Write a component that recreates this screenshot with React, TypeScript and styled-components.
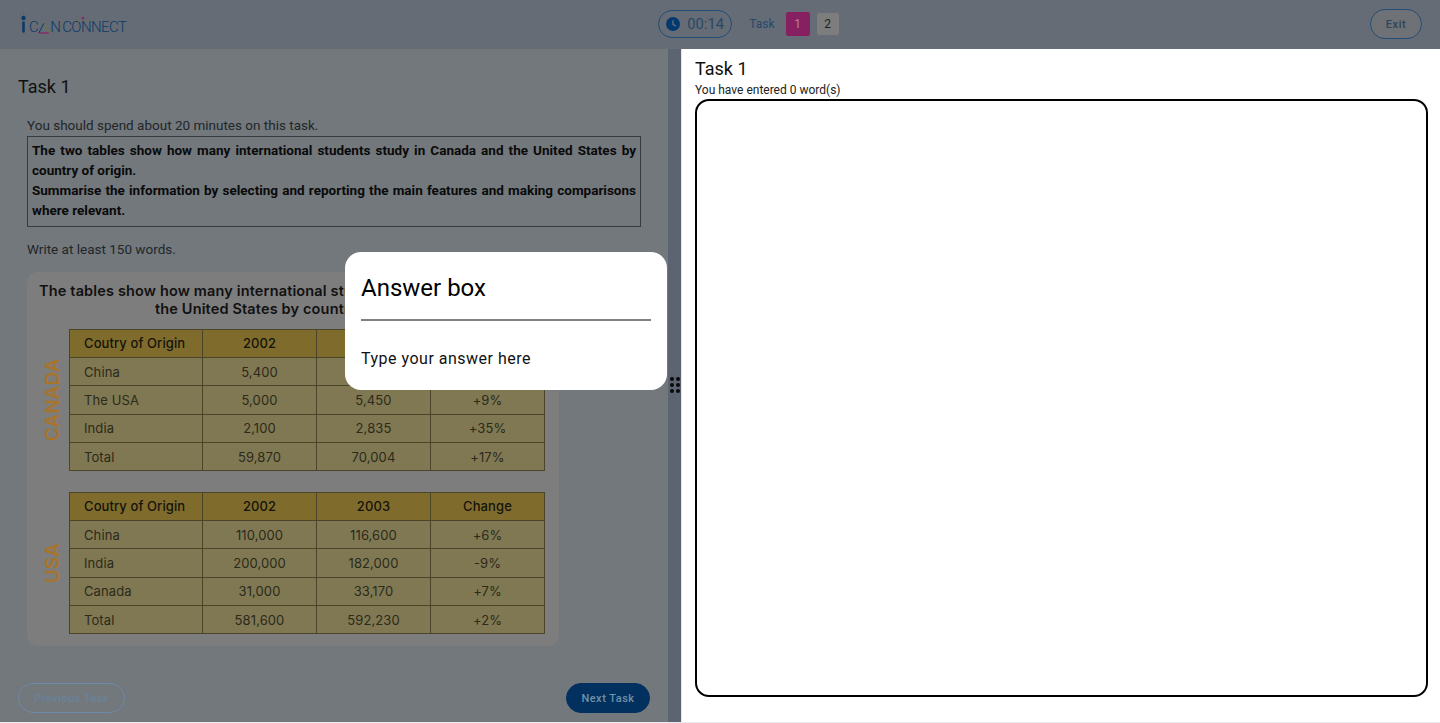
import React from 'react';
import styled, { createGlobalStyle } from 'styled-components';

const GlobalStyle = createGlobalStyle`
  * { box-sizing: border-box; }
  html, body { margin: 0; padding: 0; background: #e8ecef; overflow: hidden; }
  body { font-family: Roboto, "Liberation Sans", sans-serif; }
`;

const Page = styled.div`
  position: relative;
  display: flex;
  flex-direction: column;
  width: 1440px;
  height: 722px;
`;

const Header = styled.header`
  display: flex;
  align-items: center;
  justify-content: space-between;
  flex: 0 0 49px;
  padding: 0 18px 1px 19px;
  background: #656c75;
`;

const Logo = styled.div`
  display: flex;
  align-items: flex-end;
  width: 108px;
  height: 24px;
  margin-bottom: 2px;
  color: #0c3a66;
  font-size: 15px;
  font-weight: 300;
  line-height: 15px;
  white-space: nowrap;

  svg {
    flex-shrink: 0;
  }
`;

const LogoWord = styled.span<{ $gap?: number }>`
  position: relative;
  margin-left: ${(p) => p.$gap ?? 0}px;
  letter-spacing: -0.6px;
`;

const LogoDots = styled.svg`
  position: absolute;
  top: -4px;
  left: 15px;
`;

const TaskNav = styled.div`
  display: flex;
  align-items: center;
`;

const Timer = styled.div`
  display: flex;
  align-items: center;
  gap: 7px;
  width: 74px;
  height: 28px;
  padding-left: 7px;
  margin-right: 17px;
  border: 1px solid #234d76;
  border-radius: 14px;
  color: #2a4865;
  font-size: 14.7px;
`;

const TaskLabel = styled.span`
  margin-right: 11px;
  color: #24496e;
  font-size: 12px;
`;

const TaskNumber = styled.div<{ $active?: boolean }>`
  display: flex;
  align-items: center;
  justify-content: center;
  width: ${(p) => (p.$active ? 24 : 22)}px;
  height: ${(p) => (p.$active ? 24 : 22)}px;
  margin-right: ${(p) => (p.$active ? 7 : 0)}px;
  border-radius: 2px;
  background: ${(p) => (p.$active ? '#872060' : '#7d7d7d')};
  color: ${(p) => (p.$active ? '#b77f9f' : '#1f1f1f')};
  font-size: 12px;
`;

const ExitButton = styled.button`
  width: 52px;
  height: 30px;
  padding: 0;
  border: 1px solid #234d76;
  border-radius: 15px;
  background: #6e7175;
  color: #2f4459;
  font-family: inherit;
  font-size: 11px;
  font-weight: 500;
  letter-spacing: 0.6px;
`;

const Body = styled.div`
  display: flex;
  flex: 1;
  min-height: 0;
`;

const LeftPane = styled.section`
  display: flex;
  flex-direction: column;
  flex: 0 0 668px;
  padding: 27px 18px 9px;
  background: #72787c;
`;

const LeftTitle = styled.h2`
  margin: 0 0 18px;
  color: #111;
  font-size: 18px;
  font-weight: 400;
  line-height: 21px;
`;

const Prompt = styled.div`
  flex: 1;
  width: 614px;
  margin-left: 9px;
  color: #22262a;
  font-size: 13.5px;
  line-height: 20px;
`;

const Instruction = styled.p`
  margin: 0;
  line-height: 20px;
`;

const QuestionBox = styled.div`
  margin: 1px 0 12px;
  padding: 3px 4px 6px;
  border: 1px solid #383c40;
  color: #0a0a0a;
  font-weight: 700;
  text-align: justify;
`;

const ChartCard = styled.figure`
  width: 532px;
  height: 374px;
  margin: 13px 0 0;
  padding: 10px 14px 0 10px;
  border-radius: 10px;
  background: #7d7d7d;
`;

const ChartTitle = styled.figcaption`
  color: #111;
  font-family: Inter, Roboto, sans-serif;
  font-size: 14.5px;
  font-weight: 600;
  letter-spacing: 0.15px;
  line-height: 18px;
  text-align: center;
  white-space: nowrap;
`;

const ChartRow = styled.div<{ $top: number }>`
  display: flex;
  align-items: stretch;
  margin-top: ${(p) => p.$top}px;
`;

const SideLabel = styled.div`
  display: flex;
  align-items: center;
  justify-content: center;
  flex: 0 0 32px;
  color: #a8742a;
  font-family: Inter, Roboto, sans-serif;
  font-size: 19px;
  font-weight: 600;
  writing-mode: vertical-rl;
  transform: rotate(180deg);
`;

const DataTable = styled.table`
  width: 475px;
  border-collapse: collapse;
  table-layout: fixed;
  color: #2c2a1a;
  font-family: Inter, Roboto, sans-serif;
  font-size: 13px;
  letter-spacing: 0.1px;
`;

const HeadCell = styled.th<{ $first?: boolean }>`
  height: 28px;
  padding: 0 0 1px ${(p) => (p.$first ? 14 : 0)}px;
  border: 1px solid #4a4528;
  background: #7f6c2d;
  color: #15130a;
  font-weight: 500;
  text-align: ${(p) => (p.$first ? 'left' : 'center')};
`;

const Cell = styled.td<{ $first?: boolean }>`
  height: 28.3px;
  padding: 0 0 0 ${(p) => (p.$first ? 14 : 0)}px;
  border: 1px solid #4a4528;
  background: #7f7852;
  text-align: ${(p) => (p.$first ? 'left' : 'center')};
`;

const Footer = styled.div`
  display: flex;
  align-items: center;
  justify-content: space-between;
  width: 632px;
`;

const NavButton = styled.button<{ $primary?: boolean }>`
  width: ${(p) => (p.$primary ? 84 : 107)}px;
  height: 30px;
  padding: 0;
  border: 1px solid ${(p) => (p.$primary ? '#02305f' : '#6d8aa8')};
  border-radius: 15px;
  background: ${(p) => (p.$primary ? '#02305f' : 'transparent')};
  color: ${(p) => (p.$primary ? '#6f92aa' : '#6a8299')};
  font-family: inherit;
  font-size: 11px;
  font-weight: 500;
  letter-spacing: 0.5px;
`;

const Gutter = styled.div`
  display: flex;
  align-items: center;
  justify-content: center;
  flex: 0 0 13px;
  padding-top: 0;
  background: #5b6470;
`;

const DragDots = styled.div`
  display: grid;
  grid-template-columns: repeat(2, 4px);
  gap: 2px;
  margin-top: -2px;
`;

const Dot = styled.span`
  width: 4px;
  height: 4px;
  border-radius: 50%;
  background: #0a0a0a;
`;

const RightPane = styled.section`
  display: flex;
  flex-direction: column;
  flex: 1;
  padding: 9px 12px 25px 13px;
  border-left: 1px solid #dbe7f3;
  background: #fff;
`;

const RightTitle = styled.h2`
  margin: 0 0 4px;
  color: #111;
  font-size: 18px;
  font-weight: 400;
  line-height: 21px;
`;

const WordCount = styled.div`
  margin-bottom: 2px;
  color: #222;
  font-size: 12px;
  line-height: 14px;
`;

const AnswerArea = styled.textarea`
  flex: 1;
  width: 100%;
  border: 2px solid #000;
  border-radius: 14px;
  outline: none;
  resize: none;
`;

const Tooltip = styled.div`
  position: absolute;
  top: 252px;
  left: 345px;
  width: 322px;
  height: 138px;
  padding: 20px 16px 0;
  border-radius: 16px;
  background: #fff;
`;

const TooltipTitle = styled.h3`
  margin: 0;
  padding-bottom: 15px;
  border-bottom: 2px solid #808080;
  color: #000;
  font-size: 24px;
  font-weight: 400;
  line-height: 32px;
`;

const TooltipText = styled.p`
  margin: 28px 0 0;
  color: #111;
  font-size: 16px;
  letter-spacing: 0.5px;
  line-height: 20px;
`;

type Row = [string, string, string, string];

const canadaRows: Row[] = [
  ['China', '5,400', '6,100', '+13%'],
  ['The USA', '5,000', '5,450', '+9%'],
  ['India', '2,100', '2,835', '+35%'],
  ['Total', '59,870', '70,004', '+17%'],
];

const usaRows: Row[] = [
  ['China', '110,000', '116,600', '+6%'],
  ['India', '200,000', '182,000', '-9%'],
  ['Canada', '31,000', '33,170', '+7%'],
  ['Total', '581,600', '592,230', '+2%'],
];

const CountryTable = ({ rows }: { rows: Row[] }) => (
  <DataTable>
    <colgroup>
      <col style={{ width: 133 }} />
      <col style={{ width: 114 }} />
      <col style={{ width: 114 }} />
      <col style={{ width: 114 }} />
    </colgroup>
    <thead>
      <tr>
        <HeadCell $first>Coutry of Origin</HeadCell>
        <HeadCell>2002</HeadCell>
        <HeadCell>2003</HeadCell>
        <HeadCell>Change</HeadCell>
      </tr>
    </thead>
    <tbody>
      {rows.map((row) => (
        <tr key={row[0]}>
          {row.map((value, i) => (
            <Cell key={i} $first={i === 0}>
              {value}
            </Cell>
          ))}
        </tr>
      ))}
    </tbody>
  </DataTable>
);

const ClockIcon = () => (
  <svg width="14" height="14" viewBox="0 0 14 14">
    <circle cx="7" cy="7" r="7" fill="#023a70" />
    <path d="M7 3.2V7.4L9.9 9.2" fill="none" stroke="#656c75" strokeWidth="1.4" />
  </svg>
);

const LogoMark = () => (
  <svg width="9" height="20" viewBox="0 0 9 20" style={{ marginRight: 1, marginBottom: 2 }}>
    <path d="M4.5 0V1.6M1 1L2 2.2M8 1L7 2.2" stroke="#3d5a70" strokeWidth="0.7" />
    <circle cx="4.5" cy="5" r="2.2" fill="#0c3a66" />
    <path d="M4.5 9.5V18.5" stroke="#0c3a66" strokeWidth="2.6" strokeLinecap="round" />
  </svg>
);

const LogoTriangle = () => (
  <svg width="12" height="12" viewBox="0 0 12 12" style={{ marginBottom: 1 }}>
    <path d="M6 1L0.8 11" fill="none" stroke="#0c3a66" strokeWidth="1" />
    <path d="M0.8 11H11.2" stroke="#8f1f60" strokeWidth="1.2" />
    <path d="M6 1L11.2 11" stroke="#6c7a30" strokeWidth="0.9" />
  </svg>
);

export default function App() {
  return (
    <Page>
      <GlobalStyle />
      <Header>
        <Logo>
          <LogoMark />
          <LogoWord>C</LogoWord>
          <LogoTriangle />
          <LogoWord>N</LogoWord>
          <LogoWord $gap={2}>
            CONNECT
            <LogoDots width="10" height="7" viewBox="0 0 10 7">
              <circle cx="2" cy="5" r="1" fill="#6c7a30" />
              <circle cx="6" cy="2" r="1.2" fill="#8f1f60" />
              <circle cx="9" cy="5" r="1" fill="#6c7a30" />
            </LogoDots>
          </LogoWord>
        </Logo>
        <TaskNav>
          <Timer>
            <ClockIcon />
            00:14
          </Timer>
          <TaskLabel>Task</TaskLabel>
          <TaskNumber $active>1</TaskNumber>
          <TaskNumber>2</TaskNumber>
        </TaskNav>
        <ExitButton>Exit</ExitButton>
      </Header>
      <Body>
        <LeftPane>
          <LeftTitle>Task 1</LeftTitle>
          <Prompt>
            <Instruction>You should spend about 20 minutes on this task.</Instruction>
            <QuestionBox>
              The two tables show how many international students study in Canada and the United States by country of
              origin.
              <br />
              Summarise the information by selecting and reporting the main features and making comparisons where
              relevant.
            </QuestionBox>
            <Instruction>Write at least 150 words.</Instruction>
            <ChartCard>
              <ChartTitle>
                The tables show how many international students study in Canada and
                <br />
                the United States by country of origin.
              </ChartTitle>
              <ChartRow $top={11}>
                <SideLabel>CANADA</SideLabel>
                <CountryTable rows={canadaRows} />
              </ChartRow>
              <ChartRow $top={21}>
                <SideLabel>USA</SideLabel>
                <CountryTable rows={usaRows} />
              </ChartRow>
            </ChartCard>
          </Prompt>
          <Footer>
            <NavButton>Previous Task</NavButton>
            <NavButton $primary>Next Task</NavButton>
          </Footer>
        </LeftPane>
        <Gutter>
          <DragDots>
            {Array.from({ length: 6 }, (_, i) => (
              <Dot key={i} />
            ))}
          </DragDots>
        </Gutter>
        <RightPane>
          <RightTitle>Task 1</RightTitle>
          <WordCount>You have entered 0 word(s)</WordCount>
          <AnswerArea />
        </RightPane>
      </Body>
      <Tooltip>
        <TooltipTitle>Answer box</TooltipTitle>
        <TooltipText>Type your answer here</TooltipText>
      </Tooltip>
    </Page>
  );
}
